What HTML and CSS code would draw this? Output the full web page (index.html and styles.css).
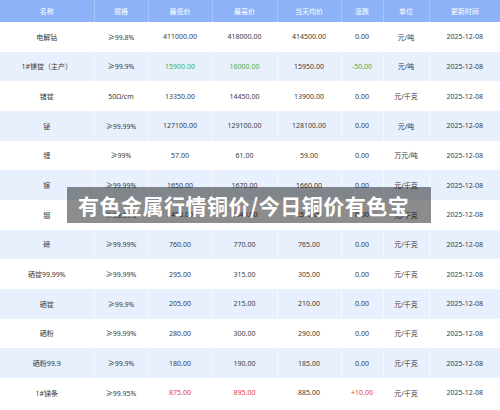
FILE: index.html
```html
<!DOCTYPE html>
<html lang="zh">
<head>
<meta charset="utf-8">
<link rel="stylesheet" href="styles.css">
</head>
<body>
<div class="page">
<table class="prices">
<colgroup>
<col class="c1"><col class="c2"><col class="c3"><col class="c4"><col class="c5"><col class="c6"><col class="c7"><col class="c8">
</colgroup>
<thead>
<tr><th>名称</th><th>规格</th><th>最低价</th><th>最高价</th><th>当天均价</th><th>涨跌</th><th>单位</th><th>更新时间</th></tr>
</thead>
<tbody>
<tr><td>电解钴</td><td>≥99.8%</td><td>411000.00</td><td>418000.00</td><td>414500.00</td><td>0.00</td><td>元/吨</td><td>2025-12-08</td></tr>
<tr><td>1#镁锭（主产）</td><td>≥99.9%</td><td class="up">15900.00</td><td class="up">16000.00</td><td>15950.00</td><td class="up">-50.00</td><td>元/吨</td><td>2025-12-08</td></tr>
<tr><td>锗锭</td><td>50Ω/cm</td><td>13350.00</td><td>14450.00</td><td>13900.00</td><td>0.00</td><td>元/千克</td><td>2025-12-08</td></tr>
<tr><td>铋</td><td>≥99.99%</td><td>127100.00</td><td>129100.00</td><td>128100.00</td><td>0.00</td><td>元/吨</td><td>2025-12-08</td></tr>
<tr><td>锂</td><td>≥99%</td><td>57.00</td><td>61.00</td><td>59.00</td><td>0.00</td><td>万元/吨</td><td>2025-12-08</td></tr>
<tr><td>镓</td><td>≥99.99%</td><td>1650.00</td><td>1670.00</td><td>1660.00</td><td>0.00</td><td>元/千克</td><td>2025-12-08</td></tr>
<tr><td>铟</td><td>≥99.99%</td><td>2490.00</td><td>2540.00</td><td>2515.00</td><td>0.00</td><td>元/千克</td><td>2025-12-08</td></tr>
<tr><td>碲</td><td>≥99.99%</td><td>760.00</td><td>770.00</td><td>765.00</td><td>0.00</td><td>元/千克</td><td>2025-12-08</td></tr>
<tr><td>硒锭99.99%</td><td>≥99.99%</td><td>295.00</td><td>315.00</td><td>305.00</td><td>0.00</td><td>元/千克</td><td>2025-12-08</td></tr>
<tr><td>硒锭</td><td>≥99.9%</td><td>205.00</td><td>215.00</td><td>210.00</td><td>0.00</td><td>元/千克</td><td>2025-12-08</td></tr>
<tr><td>硒粉</td><td>≥99.99%</td><td>280.00</td><td>300.00</td><td>290.00</td><td>0.00</td><td>元/千克</td><td>2025-12-08</td></tr>
<tr><td>硒粉99.9</td><td>≥99.9%</td><td>180.00</td><td>190.00</td><td>185.00</td><td>0.00</td><td>元/千克</td><td>2025-12-08</td></tr>
<tr><td>1#锑条</td><td>≥99.95%</td><td class="down">875.00</td><td class="down">895.00</td><td>885.00</td><td class="down">+10.00</td><td>元/千克</td><td>2025-12-08</td></tr>
</tbody>
</table>
<div class="banner">有色金属行情铜价/今日铜价有色宝</div>
</div>
</body>
</html>
```
FILE: styles.css
```css
html, body {
  margin: 0;
  padding: 0;
  background: #ffffff;
}
.page {
  position: relative;
  width: 500px;
  height: 410px;
  overflow: hidden;
  font-family: "Noto Sans", "Noto Sans CJK SC", sans-serif;
}
.prices {
  width: 500px;
  border-collapse: collapse;
  table-layout: fixed;
  font-size: 7px;
  color: #3a3a3a;
}
.c1 { width: 94px; }
.c2 { width: 54px; }
.c3 { width: 64px; }
.c4 { width: 65px; }
.c5 { width: 64px; }
.c6 { width: 42px; }
.c7 { width: 46px; }
.c8 { width: 71px; }
.prices th {
  height: 22px;
  padding: 0;
  background: #8db2f7;
  color: #ffffff;
  font-weight: normal;
  text-align: center;
  border-right: 1px solid #a9c4f8;
}
.prices td {
  height: 29.67px;
  padding: 0;
  text-align: center;
  border-right: 1px solid #f4f7fe;
  white-space: nowrap;
}
.prices th:last-child,
.prices td:last-child {
  border-right: none;
}
.prices tbody tr:nth-child(odd) td {
  border-right-color: #ffffff;
}
.prices tbody tr:nth-child(even) td {
  background: #e9f0fd;
}
.prices td.up {
  color: #4cae3f;
}
.prices td.down {
  color: #e53b3b;
}
.banner {
  position: absolute;
  left: 67px;
  top: 187px;
  width: 353px;
  height: 36px;
  padding-left: 11px;
  background: rgba(0, 0, 0, 0.45);
  color: #ffffff;
  font-size: 21px;
  font-weight: bold;
  letter-spacing: 0.5px;
  line-height: 36px;
  white-space: nowrap;
  font-family: "Noto Sans CJK SC", sans-serif;
}
```
